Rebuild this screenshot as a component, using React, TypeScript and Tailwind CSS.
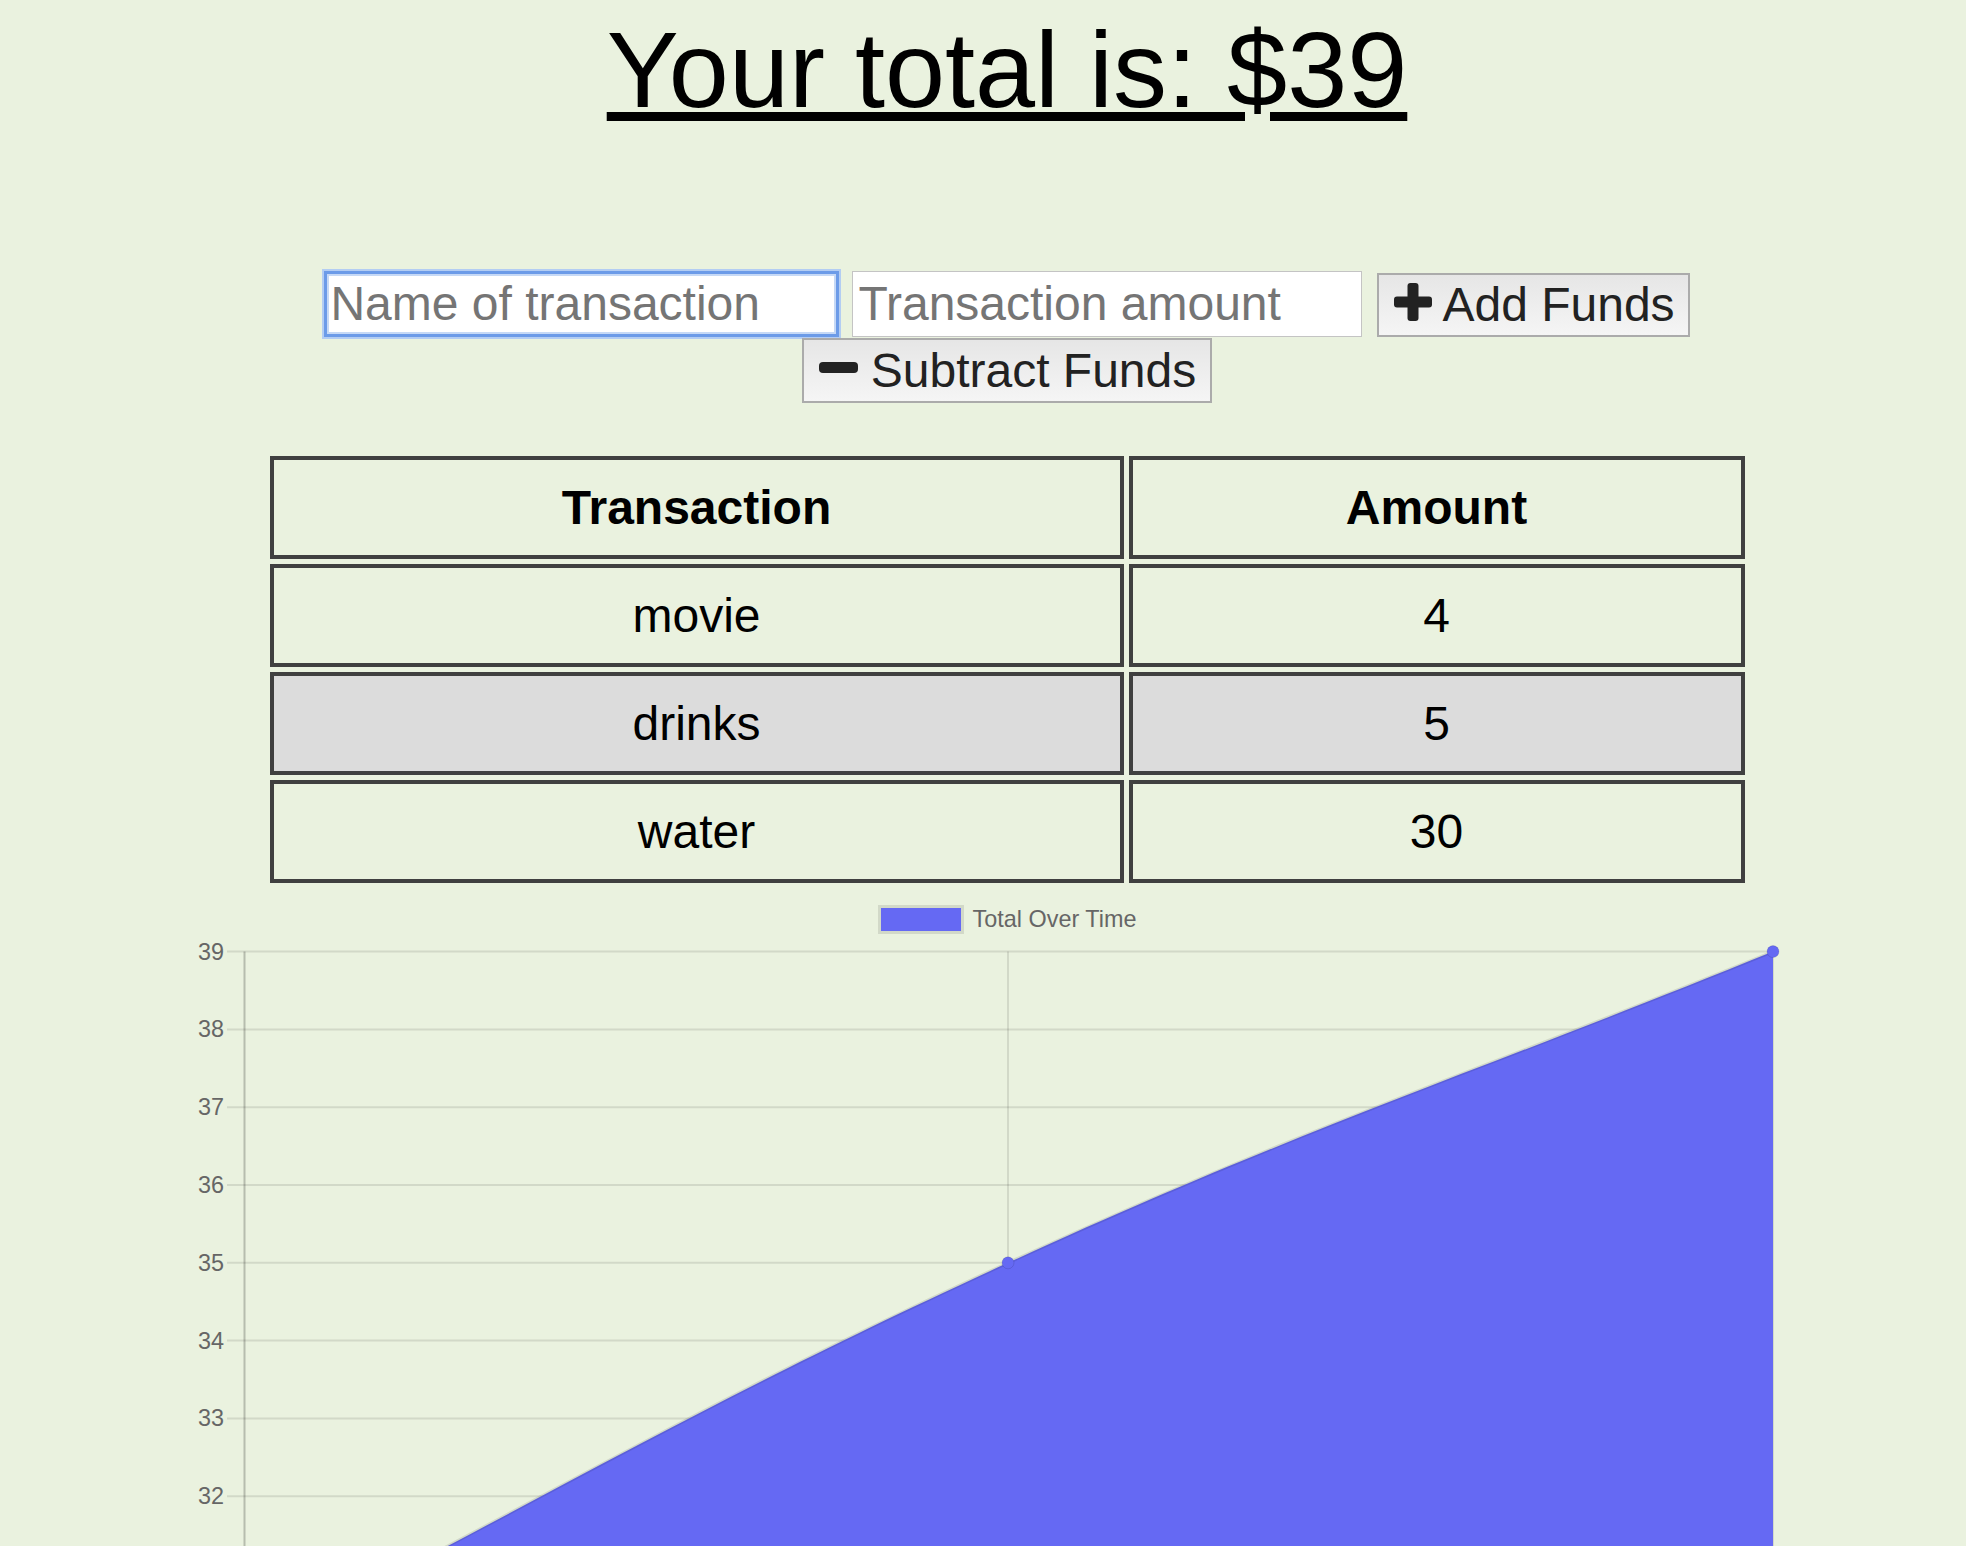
import React from "react";

const rows = [
  { name: "movie", amount: 4, shaded: false },
  { name: "drinks", amount: 5, shaded: true },
  { name: "water", amount: 30, shaded: false },
];

// chart geometry (svg coords), the plot runs on below the fold
const X0 = 196.5;
const X1 = 960;
const X2 = 1725;
const yOf = (v: number) => 17.6 + (39 - v) * 77.8;
const ticks = [39, 38, 37, 36, 35, 34, 33, 32];

function PlusIcon() {
  return (
    <svg width="38" height="38" viewBox="0 0 38 38" className="mb-[6px] shrink-0">
      <rect x="13.5" y="0" width="11" height="38" rx="3" fill="#222" />
      <rect x="0" y="13.5" width="38" height="11" rx="3" fill="#222" />
    </svg>
  );
}

function MinusIcon() {
  return (
    <svg width="39" height="11" viewBox="0 0 39 11" className="mb-[6px] shrink-0">
      <rect x="0" y="0" width="39" height="11" rx="4" fill="#222" />
    </svg>
  );
}

function TotalChart() {
  const line =
    "M196.5 717.8 C501.9 562.2 648.6 471.4 960 328.8 C1260 191.4 1419 142.1 1725 17.6";
  const area = line + " L1725 717.8 L196.5 717.8 Z";

  return (
    <div className="w-full">
      {/* legend */}
      <div className="flex justify-center items-center gap-[9px] h-[29px] mt-[17px]">
        <div className="w-[86px] h-[29px] bg-[#6569f3] bg-clip-padding border-[3px] border-[rgba(0,0,0,0.1)]" />
        <span className="text-[23.4px] text-[#666] leading-none">Total Over Time</span>
      </div>

      <svg width="1918" height="612" viewBox="0 0 1918 612" className="block">
        {/* horizontal grid */}
        {ticks.map((t) => (
          <g key={t}>
            <line x1={179} x2={X2} y1={yOf(t)} y2={yOf(t)} stroke="rgba(0,0,0,0.1)" strokeWidth={2} />
            <text
              x={176}
              y={yOf(t) + 8}
              textAnchor="end"
              fontSize={23.4}
              fill="#666"
              fontFamily="'Liberation Sans', Arial, sans-serif"
            >
              {t}
            </text>
          </g>
        ))}
        <line x1={179} x2={X2} y1={yOf(31)} y2={yOf(31)} stroke="rgba(0,0,0,0.1)" strokeWidth={2} />
        {/* vertical grid */}
        <line x1={X1} x2={X1} y1={17.6} y2={738} stroke="rgba(0,0,0,0.1)" strokeWidth={2} />
        <line x1={X2} x2={X2} y1={17.6} y2={738} stroke="rgba(0,0,0,0.1)" strokeWidth={2} />
        <line x1={X0} x2={X0} y1={17.6} y2={738} stroke="rgba(0,0,0,0.22)" strokeWidth={2} />

        {/* data */}
        <path d={area} fill="#6569f3" />
        <path d={line} fill="none" stroke="rgba(0,0,0,0.1)" strokeWidth={3} />
        {[
          [X0, yOf(30)],
          [X1, yOf(35)],
          [X2, yOf(39)],
        ].map(([cx, cy], i) => (
          <circle key={i} cx={cx} cy={cy} r={6} fill="#6569f3" stroke="rgba(0,0,0,0.1)" strokeWidth={1} />
        ))}
      </svg>
    </div>
  );
}

export default function App() {
  return (
    <div className="h-screen overflow-hidden bg-[#eaf2df] pl-[48px] font-['Liberation_Sans',Arial,Helvetica,sans-serif] text-black">
      <div className="flex flex-col items-center">
        <h1 className="mt-[8px] text-[108px] leading-[124px] font-normal underline decoration-[9px] underline-offset-[5px]">
          Your total is: $39
        </h1>

        {/* form */}
        <div className="mt-[139px] flex flex-col items-center">
          <div className="flex items-end">
            <input
              type="text"
              placeholder="Name of transaction"
              className="w-[515px] h-[66px] bg-white px-[3px] text-[48px] text-black placeholder:text-[#757575] border-[3px] border-[#6c9be8] shadow-[inset_0_0_0_2px_#c6d9f6,0_0_0_2px_#b3cdf3] outline-none"
            />
            <input
              type="text"
              placeholder="Transaction amount"
              className="ml-[13px] w-[510px] h-[66px] bg-white px-[5px] text-[48px] text-black placeholder:text-[#757575] border border-[#c4c4c4] outline-none"
            />
            <button className="ml-[15px] h-[64px] flex items-center gap-[10px] pl-[15px] pr-[13px] border-2 border-[#ababab] bg-gradient-to-b from-[#e6e6e6] to-[#f5f5f5] text-[48px] text-[#222] leading-none">
              <PlusIcon />
              <span>Add Funds</span>
            </button>
          </div>
          <button className="mt-[1px] h-[65px] flex items-center gap-[13px] pl-[15px] pr-[14px] border-2 border-[#ababab] bg-gradient-to-b from-[#e6e6e6] to-[#f5f5f5] text-[48px] text-[#222] leading-none">
            <MinusIcon />
            <span>Subtract Funds</span>
          </button>
        </div>

        {/* transactions */}
        <table className="mt-[48px] border-separate border-spacing-[5px] text-[48px]">
          <thead>
            <tr>
              <th className="w-[854px] h-[103px] border-4 border-[#404040] font-bold text-center">Transaction</th>
              <th className="w-[616px] h-[103px] border-4 border-[#404040] font-bold text-center">Amount</th>
            </tr>
          </thead>
          <tbody>
            {rows.map((r) => (
              <tr key={r.name} className={r.shaded ? "bg-[#dcdcdc]" : ""}>
                <td className="h-[103px] border-4 border-[#404040] text-center">{r.name}</td>
                <td className="h-[103px] border-4 border-[#404040] text-center">{r.amount}</td>
              </tr>
            ))}
          </tbody>
        </table>

        <TotalChart />
      </div>
    </div>
  );
}
